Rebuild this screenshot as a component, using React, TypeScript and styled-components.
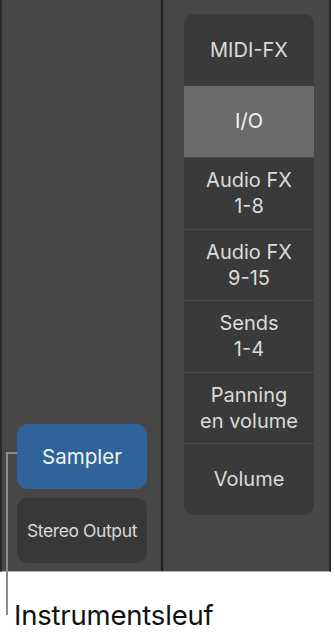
import styled, { createGlobalStyle } from "styled-components";

const GlobalStyle = createGlobalStyle`
  html, body {
    margin: 0;
    padding: 0;
    background: #ffffff;
  }
  body {
    font-family: Inter, "Noto Sans", "Liberation Sans", sans-serif;
    -webkit-font-smoothing: antialiased;
  }
`;

const Figure = styled.div`
  position: relative;
  width: 335px;
  height: 638px;
  overflow: hidden;
`;

const Mixer = styled.div`
  display: flex;
  width: 331px;
  height: 572px;
  box-sizing: border-box;
  background: #474747;
  border-left: 2px solid #2a2a2a;
  border-right: 2px solid #2a2a2a;
  border-bottom: 1px solid #b4b4b4;
`;

const StripColumn = styled.div`
  width: 161px;
  flex: none;
  display: flex;
  flex-direction: column;
  justify-content: flex-end;
  gap: 9px;
  padding: 0 14px 8px 15px;
  box-sizing: border-box;
  border-right: 2px solid #1e1e1e;
`;

const Slot = styled.div<{ $active?: boolean; $small?: boolean }>`
  height: 65px;
  border-radius: 11px;
  display: flex;
  align-items: center;
  justify-content: center;
  background: ${(p) => (p.$active ? "#2f639a" : "#383838")};
  color: ${(p) => (p.$active ? "#f2f2f2" : "#dadada")};
  font-size: ${(p) => (p.$small ? "17.5px" : "20.5px")};
  letter-spacing: ${(p) => (p.$small ? "-0.4px" : "0")};
  white-space: nowrap;
`;

const ViewColumn = styled.div`
  flex: 1;
  padding: 14px 15px 0 21px;
`;

const ViewPanel = styled.div`
  display: flex;
  flex-direction: column;
  border-radius: 11px;
  overflow: hidden;
  background: #3a3a3a;
`;

const ViewRow = styled.div<{ $selected?: boolean; $divider?: boolean }>`
  height: ${(p) => (p.$divider ? "70.5px" : "71.5px")};
  display: flex;
  align-items: center;
  justify-content: center;
  text-align: center;
  font-size: 20px;
  line-height: 26px;
  background: ${(p) => (p.$selected ? "#6a6a6a" : "#3a3a3a")};
  color: ${(p) => (p.$selected ? "#f4f4f4" : "#dcdcdc")};
  border-top: ${(p) => (p.$divider ? "1px solid #4b4b4b" : "none")};
`;

const Leader = styled.div`
  position: absolute;
  left: 6px;
  top: 452px;
  width: 11px;
  height: 163px;
  box-sizing: border-box;
  border-left: 2px solid #8c8c8c;
  border-top: 2px solid #8c8c8c;
`;

const Caption = styled.div`
  padding: 26px 0 0 14px;
  font-size: 27.5px;
  line-height: 34px;
  color: #111111;
  letter-spacing: -0.2px;
`;

const views = [
  { label: ["MIDI-FX"] },
  { label: ["I/O"], selected: true },
  { label: ["Audio FX", "1-8"] },
  { label: ["Audio FX", "9-15"] },
  { label: ["Sends", "1-4"] },
  { label: ["Panning", "en volume"] },
  { label: ["Volume"] },
];

export default function App() {
  return (
    <Figure>
      <GlobalStyle />
      <Mixer>
        <StripColumn>
          <Slot $active>Sampler</Slot>
          <Slot $small>Stereo Output</Slot>
        </StripColumn>
        <ViewColumn>
          <ViewPanel>
            {views.map((v, i) => (
              <ViewRow key={i} $selected={v.selected} $divider={i > 1}>
                <div>
                  {v.label.map((line, j) => (
                    <div key={j}>{line}</div>
                  ))}
                </div>
              </ViewRow>
            ))}
          </ViewPanel>
        </ViewColumn>
      </Mixer>
      <Leader />
      <Caption>Instrumentsleuf</Caption>
    </Figure>
  );
}
